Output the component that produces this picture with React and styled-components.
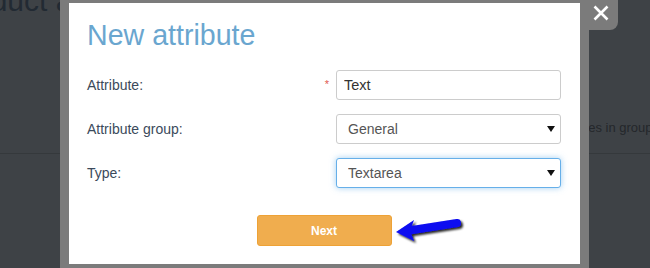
import React from "react";
import styled, { createGlobalStyle } from "styled-components";

const Global = createGlobalStyle`
  html, body { margin: 0; padding: 0; }
  body {
    background: #3e4246;
    font-family: "Liberation Sans", Arial, sans-serif;
    overflow: hidden;
  }
`;

const Page = styled.div`
  position: relative;
  width: 650px;
  height: 268px;
  overflow: hidden;
  background: #3e4246;
`;

const BgHeading = styled.h1`
  margin: -14px 0 0 -56px;
  font-size: 30px;
  line-height: 30px;
  font-weight: normal;
  color: #222a33;
  white-space: nowrap;
`;

const BgToolbar = styled.div`
  padding: 104px 0 17px 547px;
  line-height: 16px;
  font-size: 13px;
  color: #24272b;
  border-bottom: 1px solid #35393c;
  white-space: nowrap;
`;

const Frame = styled.div`
  position: absolute;
  left: 60px;
  top: 0;
  width: 529px;
  height: 268px;
  box-sizing: border-box;
  padding: 3px 9px 4px 9px;
  background: #7b7b7b;
`;

const CloseButton = styled.button`
  position: absolute;
  top: 0;
  right: -29px;
  width: 38px;
  height: 30px;
  border: none;
  padding: 0 0 4px 4px;
  background: #7b7b7b;
  border-bottom-right-radius: 8px;
  display: flex;
  align-items: center;
  justify-content: center;
  cursor: pointer;
`;

const Panel = styled.div`
  height: 100%;
  box-sizing: border-box;
  background: #fff;
  padding: 15px 19px 0 18px;
`;

const Title = styled.h2`
  margin: 0;
  font-size: 28.6px;
  line-height: 34px;
  font-weight: normal;
  color: #6aa6cf;
`;

const Form = styled.div`
  margin-top: 18px;
  display: grid;
  grid-template-columns: 1fr 225px;
  grid-auto-rows: 30px;
  row-gap: 14px;
`;

const Label = styled.label`
  display: flex;
  align-items: center;
  justify-content: space-between;
  padding-right: 7px;
  font-size: 14px;
  color: #3b4a5b;
`;

const Required = styled.span`
  color: #e05a4e;
  font-size: 11px;
  align-self: flex-start;
  margin-top: 8px;
`;

const TextInput = styled.input`
  box-sizing: border-box;
  width: 100%;
  height: 30px;
  margin: 0;
  border: 1px solid #cccccc;
  border-radius: 3px;
  padding: 0 7px;
  font-family: "Liberation Sans", Arial, sans-serif;
  font-size: 14.5px;
  color: #333;
  outline: none;
`;

const SelectWrap = styled.div`
  position: relative;
`;

const Select = styled.select`
  box-sizing: border-box;
  width: 100%;
  height: 30px;
  margin: 0;
  appearance: none;
  -webkit-appearance: none;
  background: #fff;
  border: 1px solid ${(p) => (p.$focused ? "#66afe9" : "#cccccc")};
  box-shadow: ${(p) =>
    p.$focused ? "0 0 6px rgba(102,175,233,0.6)" : "none"};
  border-radius: 3px;
  padding: 0 0 0 11px;
  font-family: "Liberation Sans", Arial, sans-serif;
  font-size: 14px;
  color: #555;
  outline: none;
`;

const Caret = styled.svg`
  position: absolute;
  right: 6px;
  top: 12px;
  pointer-events: none;
`;

const Footer = styled.div`
  position: relative;
  margin-top: 27px;
  display: flex;
  justify-content: center;
`;

const NextButton = styled.button`
  width: 135px;
  height: 31px;
  box-sizing: border-box;
  background: #f0ad4e;
  border: 1px solid #eea236;
  border-radius: 3px;
  color: #fff;
  font-family: "Liberation Sans", Arial, sans-serif;
  font-weight: bold;
  font-size: 12px;
  cursor: pointer;
`;

const Pointer = styled.svg`
  position: absolute;
  left: calc(50% + 71px);
  top: -1px;
`;

function SelectField({ value, options, focused }) {
  return (
    <SelectWrap>
      <Select $focused={focused} defaultValue={value}>
        {options.map((o) => (
          <option key={o}>{o}</option>
        ))}
      </Select>
      <Caret width="8" height="6" viewBox="0 0 8 6">
        <polygon points="0,0 8,0 4,6" fill="#111" />
      </Caret>
    </SelectWrap>
  );
}

export default function App() {
  return (
    <>
      <Global />
      <Page>
        <BgHeading>Product attributes</BgHeading>
        <BgToolbar>Attributes in group</BgToolbar>
        <Frame>
          <CloseButton aria-label="Close">
            <svg width="16" height="16" viewBox="0 0 16 16">
              <path
                d="M1.5 1.5 L14.5 14.5 M14.5 1.5 L1.5 14.5"
                stroke="#fff"
                strokeWidth="2.6"
                strokeLinecap="butt"
              />
            </svg>
          </CloseButton>
          <Panel>
            <Title>New attribute</Title>
            <Form>
              <Label>
                Attribute:
                <Required>*</Required>
              </Label>
              <TextInput defaultValue="Text" />
              <Label>Attribute group:</Label>
              <SelectField value="General" options={["General"]} />
              <Label>Type:</Label>
              <SelectField value="Textarea" options={["Text", "Textarea"]} focused />
            </Form>
            <Footer>
              <NextButton>Next</NextButton>
              <Pointer width="72" height="34" viewBox="0 0 72 34">
                <defs>
                  <filter id="arrowShadow" x="-20%" y="-30%" width="150%" height="170%">
                    <feDropShadow dx="2" dy="2" stdDeviation="1.2" floodColor="#000" floodOpacity="0.85" />
                  </filter>
                </defs>
                <g filter="url(#arrowShadow)" fill="#0a0af0">
                  <path
                    d="M14 16.5 L62 9"
                    stroke="#0a0af0"
                    strokeWidth="8"
                    strokeLinecap="round"
                  />
                  <polygon points="1,18 19,6 15,17 19,27" />
                </g>
              </Pointer>
            </Footer>
          </Panel>
        </Frame>
      </Page>
    </>
  );
}
